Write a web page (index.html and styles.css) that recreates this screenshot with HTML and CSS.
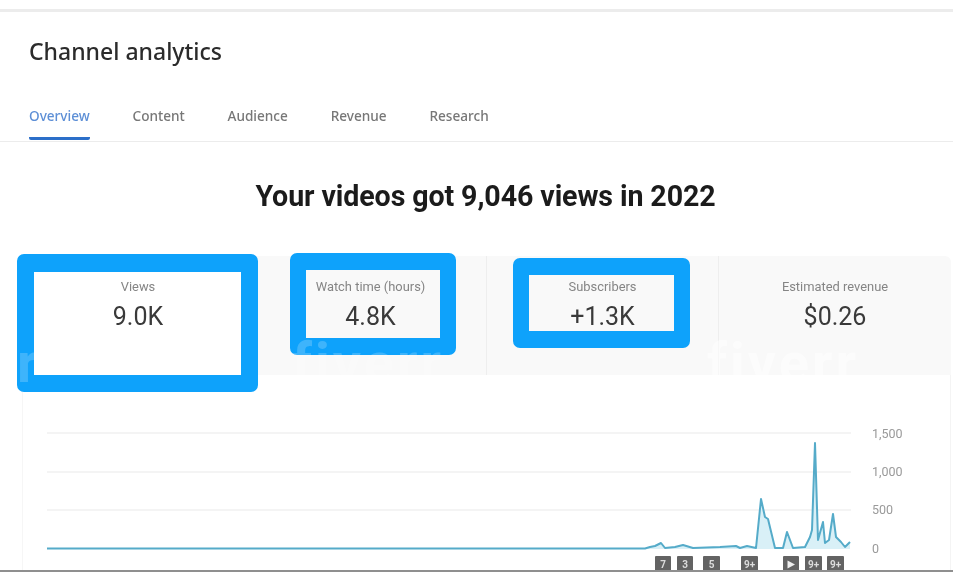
FILE: index.html
```html
<!DOCTYPE html>
<html lang="en">
<head>
<meta charset="utf-8">
<title>Channel analytics</title>
<link rel="stylesheet" href="styles.css">
</head>
<body>
<div class="page">
  <div class="topline"></div>
  <header class="head">
    <h1 class="title">Channel analytics</h1>
    <nav class="tabs">
      <a class="tab active">Overview</a>
      <a class="tab">Content</a>
      <a class="tab">Audience</a>
      <a class="tab">Revenue</a>
      <a class="tab">Research</a>
    </nav>
  </header>
  <h2 class="headline">Your videos got 9,046 views in 2022</h2>
  <section class="metrics">
    <div class="metric first"><div class="label">Views</div><div class="value">9.0K</div></div>
    <div class="metric"><div class="label">Watch time (hours)</div><div class="value">4.8K</div></div>
    <div class="metric"><div class="label">Subscribers</div><div class="value">+1.3K</div></div>
    <div class="metric"><div class="label">Estimated revenue</div><div class="value">$0.26</div></div>
  </section>
  <section class="chart">
    <svg class="plot" viewBox="22 375 929 196" width="929" height="196">
      <g class="grid">
        <line x1="47" y1="433" x2="851" y2="433"/>
        <line x1="47" y1="472" x2="851" y2="472"/>
        <line x1="47" y1="510" x2="851" y2="510"/>
      </g>
      <path class="area" d="M47 548.5H645L650 547L655 546L661 543L665 548L675 547L683 545L693 548L720 547L736 546L740 548L747 546L756 548L761 499L765 517L768 519L775 548L783 548L787 532L793 548L805 547L810 537L812 530L815 443L818 540L823 522L825 543L829 540L833 514L836 537L841 542L845 547L850 542V549H47Z"/>
      <path class="line" d="M47 548.5H645L650 547L655 546L661 543L665 548L675 547L683 545L693 548L720 547L736 546L740 548L747 546L756 548L761 499L765 517L768 519L775 548L783 548L787 532L793 548L805 547L810 537L812 530L815 443L818 540L823 522L825 543L829 540L833 514L836 537L841 542L845 547L850 542"/>
      <g class="ylabels">
        <text x="872" y="438">1,500</text>
        <text x="872" y="476">1,000</text>
        <text x="872" y="514">500</text>
        <text x="872" y="553">0</text>
      </g>
      <g class="marks">
        <rect x="655" y="556" width="16" height="17" rx="1"/><text x="663" y="568">7</text>
        <rect x="677" y="556" width="16" height="17" rx="1"/><text x="685" y="568">3</text>
        <rect x="703" y="556" width="17" height="17" rx="1"/><text x="711.5" y="568">5</text>
        <rect x="741" y="556" width="17" height="17" rx="1"/><text x="749.5" y="568">9+</text>
        <rect x="783" y="556" width="16" height="17" rx="1"/><path class="play" d="M787.500 560.500L795 564.500L787.500 568.500Z"/>
        <rect x="805" y="556" width="17" height="17" rx="1"/><text x="813.500" y="568">9+</text>
        <rect x="827" y="556" width="17" height="17" rx="1"/><text x="835.500" y="568">9+</text>
      </g>
    </svg>
  </section>
  <div class="bottomline"></div>

  <div class="hl hl-views"></div>
  <div class="hl hl-watch"></div>
  <div class="hl hl-subs"></div>

  <div class="mark mark-a">r</div>
  <div class="mark mark-b">fiverr</div>
  <div class="mark mark-c">fiverr</div>
</div>
</body>
</html>
```
FILE: styles.css
```css
* { box-sizing: border-box; }
html, body { margin: 0; padding: 0; background: #fff; }
body { width: 953px; height: 572px; overflow: hidden; }
.page {
  position: relative;
  width: 953px;
  height: 572px;
  overflow: hidden;
  padding-top: 9px;
  filter: blur(0.7px);
  font-family: "Roboto", "Liberation Sans", sans-serif;
}
.topline { height: 3px; background: #ececec; }
.head {
  height: 130px;
  padding: 25px 0 0 29px;
  border-bottom: 1px solid #ececec;
  display: flex;
  flex-direction: column;
}
.title {
  margin: 0;
  height: 28px;
  font: 500 23px/28px "Noto Sans", sans-serif;
  color: #2b2b2b;
}
.tabs { display: flex; gap: 42.8px; margin-top: 36px; }
.tab {
  height: 39px;
  padding-top: 6px;
  font: 500 13.6px/18px "Noto Sans", sans-serif;
  color: #777;
}
.tab.active {
  color: #5d8fd6;
  border-bottom: 3px solid #2c6fc9;
  border-radius: 0 0 2px 2px;
}
.headline {
  margin: 0;
  height: 114px;
  padding-top: 36px;
  text-align: center;
  font: 700 28.6px/36px "Roboto", sans-serif;
  color: #1b1b1b;
  letter-spacing: -0.1px;
  width: 971px;
}
.metrics {
  display: grid;
  grid-template-columns: 232px 232px 232px 233px;
  height: 119px;
  margin: 0 2px 0 22px;
  background: #f9f9f9;
  border-radius: 0 6px 0 0;
}
.metric {
  padding-top: 23px;
  text-align: center;
  border-left: 1px solid #eee;
}
.metric.first { background: #fff; border-left: 0; }
.label { font-size: 12.9px; line-height: 16px; color: #858585; }
.value { margin-top: 7px; font-size: 25px; line-height: 30px; color: #3a3a3a; }
.chart {
  height: 196px;
  margin: 0 2px 0 22px;
  background: #fff;
  border-left: 1px solid #f6f6f6;
  border-right: 1px solid #f4f4f4;
}
.plot { display: block; margin-left: -1px; }
.grid line { stroke: #f0f0f0; stroke-width: 1.500; }
.area { fill: #d9f0f7; stroke: none; }
.line { fill: none; stroke: #55abc9; stroke-width: 2; stroke-linejoin: round; }
.ylabels text { font: 12.5px "Roboto", sans-serif; fill: #9a9a9a; }
.marks rect { fill: #636363; }
.marks text { font: 700 10px "Roboto", sans-serif; fill: #dcdcdc; text-anchor: middle; }
.play { fill: #eee; }
.bottomline { height: 2px; background: #8f8f8f; margin-top: -1px; position: relative; }
.mark {
  position: absolute;
  top: 343px;
  font: 700 56px/40px "Roboto", sans-serif;
  letter-spacing: 3px;
  color: rgba(255, 255, 255, 0.2);
}
.mark-a { left: 17px; }
.mark-b { left: 292px; }
.mark-c { left: 707px; color: rgba(255, 255, 255, 0.5); }
.hl {
  position: absolute;
  border: solid #0ea2fb;
  border-radius: 7px;
}
.hl-views { left: 17px; top: 254px; width: 241px; height: 138px; border-width: 18px 17px 17px 17px; }
.hl-watch { left: 290px; top: 253px; width: 166px; height: 102px; border-width: 17px 16px 17px 16px; }
.hl-subs { left: 513px; top: 258px; width: 177px; height: 90px; border-width: 17px 16px 17px 16px; }
```
